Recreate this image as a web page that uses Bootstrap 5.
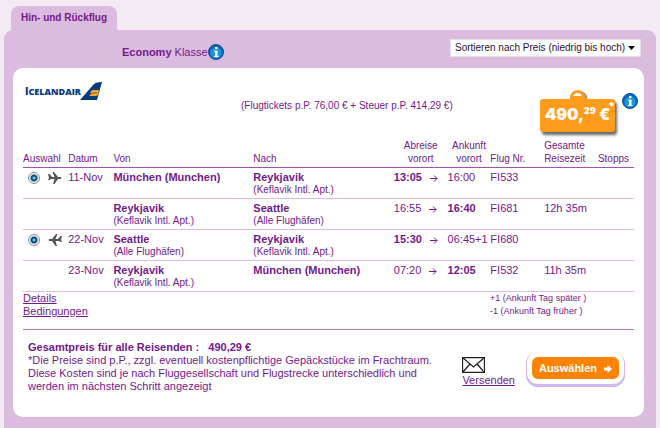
<!DOCTYPE html>
<html lang="de">
<head>
<meta charset="utf-8">
<meta name="viewport" content="width=device-width, initial-scale=1">
<title>Hin- und Rückflug</title>
<link href="https://cdn.jsdelivr.net/npm/bootstrap@5.3.0/dist/css/bootstrap.min.css" rel="stylesheet">
<style>
body{background:#f4eaf4;color:#73198c;font:11px/14px "Liberation Sans",Arial,sans-serif;padding:6px 4px 0}
a{color:#73198c}
a:hover{color:#4b0b5e}
.tab{background:#dcbcde;color:#73198c;border:0;border-radius:8px 8px 0 0;font-size:10px;font-weight:bold;height:24px;width:106px;padding:0;margin-left:7px}
.shell{background:#dcbcde;border-radius:9px 9px 0 0;padding:9px 12px 11px 9px;min-height:calc(100vh - 30px)}
.topbar{height:29px;padding-right:3px}
.klasse{margin-left:109px;font-size:11px;height:26px}
.sort{width:191px;height:18px;border:1px solid #e9dcea;border-radius:0;color:#2c1236;font-size:10px;line-height:14px;padding:0 14px 0 4px;background-size:9px 5px;background-position:right 4px center;
background-image:url("data:image/svg+xml,%3Csvg xmlns='http://www.w3.org/2000/svg' viewBox='0 0 9 5'%3E%3Cpath d='M1 0h7L4.5 4z'/%3E%3C/svg%3E")}
.panel{background:#fff;border-radius:10px;padding:9px 10px 24px}
.offer{height:62px;margin-right:-4px}
.fare{font-size:10px;margin-left:138px;margin-top:22px}
.price{width:75px;height:33px;border-radius:3px;background:#ff9c1c;box-shadow:2px 3px 3px #666;color:#fff;font:900 16px/30px Inter,"Liberation Sans",sans-serif;padding-left:5px;margin:22px 7px 0 auto;white-space:nowrap}
.price sup{font-size:9px;top:-6px;line-height:0}
.price .star{position:absolute;right:0;top:1px;font-size:11px;line-height:12px}
.handle{position:absolute;left:29px;top:-10px}
.flights{table-layout:fixed;width:100%;color:inherit}
.flights th{font-weight:normal;font-size:10px;line-height:13px;vertical-align:bottom;padding:0 0 2px;height:28px}
.flights thead tr{border-bottom:1px solid #a650b4}
.flights tbody tr{border-bottom:1px solid #deb9e3;height:31px}
.flights td{padding:2px 0;vertical-align:top;line-height:14px;white-space:nowrap}
.flights .air{display:block;font-size:10px;line-height:12px}
.pick{appearance:none;width:12px;height:12px;border:1px solid #8293a3;border-radius:50%;margin:0 0 0 5px;background:#e3edf3}
.pick:checked{background:radial-gradient(circle,#6cc0ee 0 1px,#194e76 2px 3px,#e3edf3 4px)}
.choice{padding-top:2px}
.links{line-height:13px}
.notes{font-size:9px;line-height:13px;width:144px}
.rule{border-top:1px solid #b27cc0;margin-top:11px;padding:11px 15px 0 5px}
.legal{width:410px;line-height:13px}
.go{background:#ff8200;color:#fff;border:0;border-radius:6px;font-weight:bold;height:22px;width:87px;padding:0;box-shadow:0 0 0 5px #fff,0 1px 0 6px #d2b8f0,0 2px 0 6px #d2b8f0;margin-left:17px}
</style>
<script src="https://cdn.jsdelivr.net/npm/bootstrap@5.3.0/dist/js/bootstrap.bundle.min.js"></script>
</head>
<body>
<svg class="d-none" xmlns="http://www.w3.org/2000/svg">
<symbol id="info" viewBox="0 0 16 16"><circle cx="8" cy="8" r="7.5" fill="#0869bd" stroke="#0b4b8c"/><circle cx="8" cy="9" r="5.5" fill="#2aa6f0" opacity=".7"/><path d="M7 3h2.500v2H7zM6 6.500h3.500V12h1v1H6v-1h1V7.500H6z" fill="#fff"/></symbol>
<symbol id="plane" viewBox="0 0 14 12"><path d="M0 2h1.500L4 5h2.500L4.500 0H6l4 5h2.500q2 1 0 2H10l-3.500 5H5L6.500 7H3L1.500 8H0l1-2z" fill="#555"/></symbol>
<symbol id="arrow" viewBox="0 0 8 7"><path d="M0 3.500h7M4 .5l3 3-3 3" fill="none" stroke="#73198c"/></symbol>
</svg>
<button class="tab d-block" type="button">Hin- und Rückflug</button>
<main class="shell">
<div class="topbar d-flex justify-content-between align-items-start">
<div class="klasse d-flex align-items-center"><span><b>Economy</b> Klasse</span><svg width="16" height="16" role="img" aria-label="Information"><use href="#info"/></svg></div>
<select class="form-select sort" aria-label="Sortierung"><option>Sortieren nach Preis (niedrig bis hoch)</option></select>
</div>
<section class="panel">
<div class="offer d-flex align-items-start">
<svg class="mt-1" width="80" height="20" viewBox="0 0 80 20" role="img" aria-label="Icelandair"><text x="2" y="14" fill="#063b7c" font-family="Open Sans" font-size="10" font-weight="800">I<tspan font-size="9">CELANDAIR</tspan></text><path d="M57 19 71 3Q73 1 79 1l-5 18z" fill="#063b7c"/><path d="M69 9h7l-1 5-2 1h-7l3-3h-2z" fill="#f4a62a"/><path d="M69 12h5" stroke="#8a661f"/></svg>
<div class="fare">(Flugtickets p.P. 76,00 € + Steuer p.P. 414,29 €)</div>
<div class="price position-relative"><svg class="handle" width="19" height="10" viewBox="0 0 19 10" aria-hidden="true"><path d="M4 10a6.500 6.500 0 0 1 13 0" fill="none" stroke="#999" stroke-width="3"/><path d="M2.500 8.500a6 6 0 0 1 12 0z" fill="#fff" stroke="#ff9c1c" stroke-width="3"/></svg>490,<sup>29</sup> €<span class="star">*</span></div>
<svg class="mt-3" width="16" height="16" role="img" aria-label="Preisinformation"><use href="#info"/></svg>
</div>
<table class="flights">
<colgroup><col style="width:7.4%"><col style="width:7.4%"><col style="width:22.9%"><col style="width:23%"><col style="width:8.8%"><col style="width:7%"><col style="width:8.8%"><col style="width:8.8%"><col style="width:5.9%"></colgroup>
<thead><tr><th>Auswahl</th><th>Datum</th><th>Von</th><th>Nach</th><th class="text-center">Abreise<br>vorort</th><th class="text-center">Ankunft<br>vorort</th><th>Flug Nr.</th><th>Gesamte<br>Reisezeit</th><th>Stopps</th></tr></thead>
<tbody>
<tr><td><div class="choice d-flex align-items-center gap-2"><input class="pick" type="radio" name="hin" aria-label="Hinflug 11-Nov" checked><svg width="14" height="12" aria-hidden="true"><use href="#plane"/></svg></div></td><td>11-Nov</td><td><b>München (Munchen)</b></td><td><b>Reykjavik</b><span class="air">(Keflavik Intl. Apt.)</span></td><td><b>13:05</b><svg class="ms-2" width="8" height="7"><use href="#arrow"/></svg></td><td>16:00</td><td>FI533</td><td></td><td></td></tr>
<tr><td></td><td></td><td><b>Reykjavik</b><span class="air">(Keflavik Intl. Apt.)</span></td><td><b>Seattle</b><span class="air">(Alle Flughäfen)</span></td><td>16:55<svg class="ms-2" width="8" height="7"><use href="#arrow"/></svg></td><td><b>16:40</b></td><td>FI681</td><td>12h 35m</td><td></td></tr>
<tr><td><div class="choice d-flex align-items-center gap-2"><input class="pick" type="radio" name="rueck" aria-label="Rückflug 22-Nov" checked><svg width="14" height="12" aria-hidden="true"><use href="#plane" transform="matrix(-1 0 0 1 14 0)"/></svg></div></td><td>22-Nov</td><td><b>Seattle</b><span class="air">(Alle Flughäfen)</span></td><td><b>Reykjavik</b><span class="air">(Keflavik Intl. Apt.)</span></td><td><b>15:30</b><svg class="ms-2" width="8" height="7"><use href="#arrow"/></svg></td><td>06:45+1</td><td>FI680</td><td></td><td></td></tr>
<tr><td></td><td>23-Nov</td><td><b>Reykjavik</b><span class="air">(Keflavik Intl. Apt.)</span></td><td><b>München (Munchen)</b></td><td>07:20<svg class="ms-2" width="8" height="7"><use href="#arrow"/></svg></td><td><b>12:05</b></td><td>FI532</td><td>11h 35m</td><td></td></tr>
</tbody></table>
<div class="d-flex justify-content-between"><div class="links"><a href="#details">Details</a><br><a href="#bedingungen">Bedingungen</a></div><div class="notes">+1 (Ankunft Tag später )<br>-1 (Ankunft Tag früher )</div></div>
<div class="rule d-flex justify-content-between align-items-start">
<div class="legal"><b>Gesamtpreis für alle Reisenden : &nbsp; 490,29 €</b><br>*Die Preise sind p.P., zzgl. eventuell kostenpflichtige Gepäckstücke im Frachtraum. Diese Kosten sind je nach Fluggesellschaft und Flugstrecke unterschiedlich und werden im nächsten Schritt angezeigt</div>
<div class="d-flex align-items-start pt-3"><a href="#versenden"><svg class="d-block" width="23" height="16" viewBox="0 0 23 16" aria-hidden="true"><path d="M.5.5h22v15H.5zM.5.5 11.500 10l11-9.500M.5 15.500 8 7M22.500 15.500 15 7" fill="#fff" stroke="#222" stroke-width="1.300"/></svg>Versenden</a>
<button class="go" type="button">Auswählen <svg class="ms-1" width="8" height="8" viewBox="0 0 8 8" aria-hidden="true"><path d="M0 2.500h3.500V0L8 4 3.500 8V5.500H0z" fill="#fff"/></svg></button></div>
</div>
</section>
</main>
</body>
</html>
